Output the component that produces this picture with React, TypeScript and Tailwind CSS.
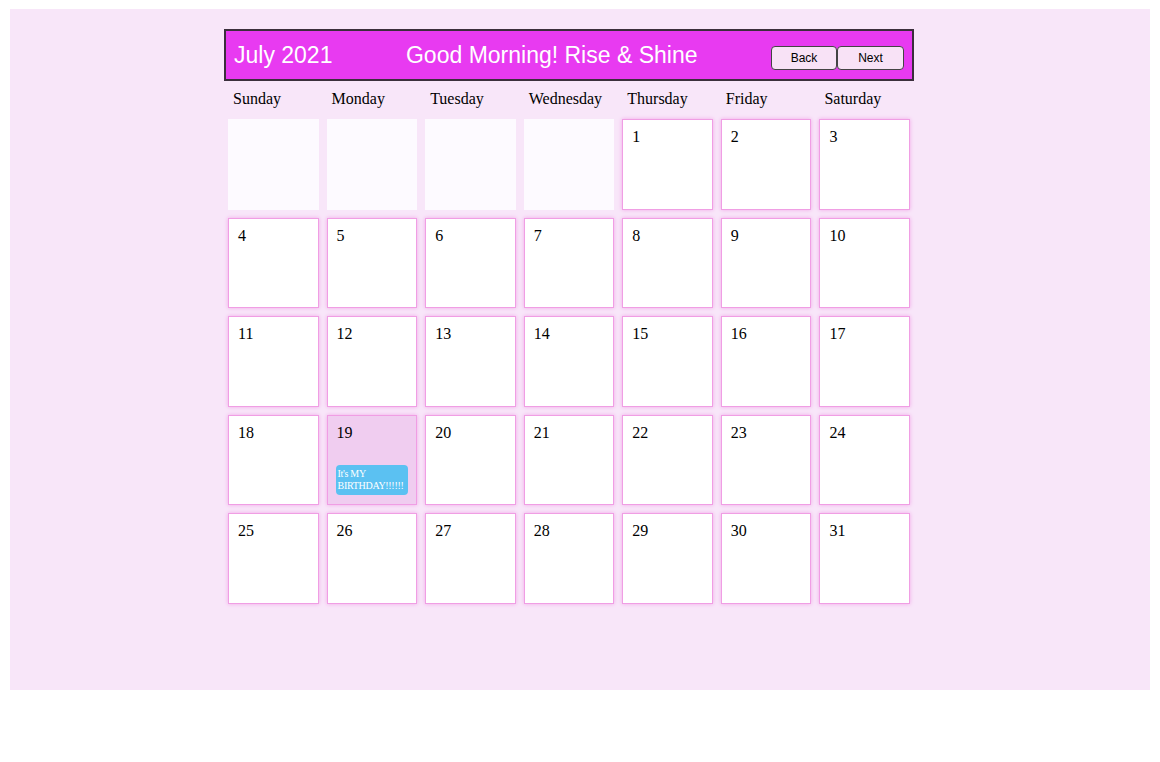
import React from "react";

const dayNames = ["Sunday", "Monday", "Tuesday", "Wednesday", "Thursday", "Friday", "Saturday"];

// July 2021 starts on a Thursday
const cells: (number | null)[] = [
  null, null, null, null,
  ...Array.from({ length: 31 }, (_, i) => i + 1),
];

const events: Record<number, string> = {
  19: "It's MY BIRTHDAY!!!!!!",
};

const App: React.FC = () => {
  return (
    <div className="bg-white min-h-[762px] pt-[9px]">
      <div className="mx-[10px] h-[681px] bg-[#f8e6f9] pt-[20px] pl-[214px]">
        <div className="w-[690px]">
          {/* Header bar */}
          <header className="flex justify-between items-center h-[52px] px-[8px] bg-[#e83af1] border-2 border-[#3b2f3c] text-white font-['Liberation_Sans',Arial,sans-serif]">
            <h2 className="text-[23px] leading-none">July 2021</h2>
            <h2 className="text-[23px] leading-none">Good Morning! Rise &amp; Shine</h2>
            <div className="flex mt-[6px]">
              <button className="w-[66px] h-[24px] bg-[#f8e2f6] border border-[#444] rounded-[4px] text-[12px] text-black">
                Back
              </button>
              <button className="w-[67px] h-[24px] bg-[#f8e2f6] border border-[#444] rounded-[4px] text-[12px] text-black">
                Next
              </button>
            </div>
          </header>

          {/* Weekday labels */}
          <div className="grid grid-cols-7 h-[34px] font-['Liberation_Serif','Times_New_Roman',serif] text-[16px] text-black">
            {dayNames.map((d) => (
              <div key={d} className="pl-[9px] pt-[9px] leading-[18px]">
                {d}
              </div>
            ))}
          </div>

          {/* Days grid */}
          <div className="grid grid-cols-7 font-['Liberation_Serif','Times_New_Roman',serif] text-black">
            {cells.map((day, i) =>
              day === null ? (
                <div key={i} className="m-[4px] aspect-square bg-[#fdfaff]" />
              ) : (
                <div
                  key={i}
                  className={`m-[4px] aspect-square flex flex-col border border-[#f09ee4] shadow-[0_0_4px_#f2a6e8] ${
                    events[day] ? "bg-[#f0cdf0]" : "bg-white"
                  }`}
                >
                  <span className="pl-[9px] pt-[8px] text-[16px] leading-[18px]">{day}</span>
                  {events[day] && (
                    <div className="mt-auto mx-[8px] mb-[9px] rounded-[4px] bg-[#5bc1f2] text-white text-[10px] leading-[12px] tracking-[-0.3px] px-[2px] py-[3px]">
                      {events[day]}
                    </div>
                  )}
                </div>
              )
            )}
          </div>
        </div>
      </div>
    </div>
  );
};

export default App;
